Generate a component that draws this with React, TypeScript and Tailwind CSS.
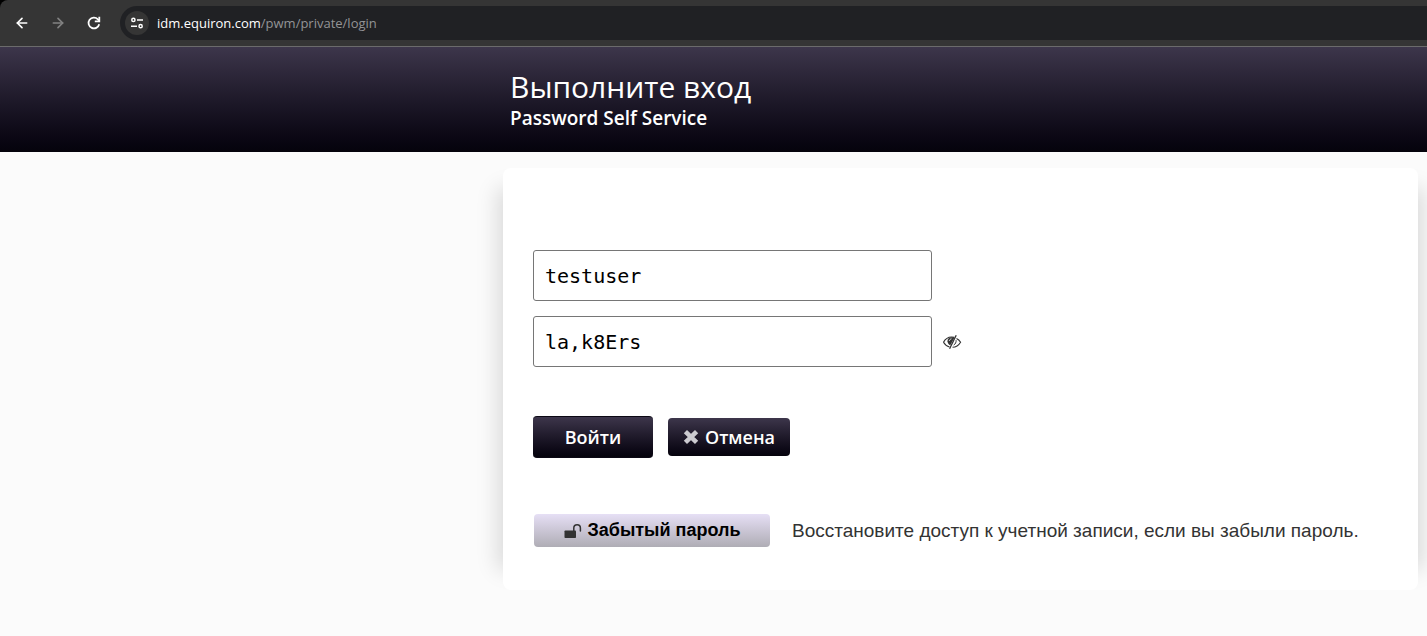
import { useState } from "react";
import { ArrowLeft, ArrowRight } from "lucide-react";

const PAGE_INSET = "pl-[503px] pr-[9px]";

function ReloadIcon() {
  return (
    <svg viewBox="0 0 16 16" className="size-4" fill="none" stroke="currentColor" strokeWidth="1.8" aria-hidden="true">
      <path d="M13.2 9.2A5.4 5.4 0 1 1 11.9 4.300L13.300 5.700" />
      <path d="M13.3 1.8v4.500H8.800" />
    </svg>
  );
}

function TuneIcon() {
  return (
    <svg viewBox="0 0 14 14" className="size-3.5" fill="none" stroke="currentColor" strokeWidth="1.5" aria-hidden="true">
      <circle cx="3.4" cy="3.9" r="1.6" />
      <path d="M7 3.9h6M1 10.2h6" />
      <circle cx="10.6" cy="10.2" r="1.6" />
    </svg>
  );
}

function EyeSlashIcon() {
  return (
    <svg viewBox="0 0 20 16" className="h-4 w-5" fill="none" stroke="currentColor" aria-hidden="true">
      <path d="M1.5 8.2C3.3 4.900 6 3 9.600 3c.9 0 1.800.1 2.600.4M7.500 13C4.900 12.300 2.900 10.600 1.500 8.200" strokeWidth="1.2" />
      <path d="M14.500 4.500C16.300 5.300 17.600 6.600 18.600 8.200C16.700 11.300 14 13.200 10.500 13.300" strokeWidth="1.1" />
      <path d="M9.800 3.200C6.800 3.200 5.300 5 5.500 7.200C5.700 9.200 6.700 10.600 8.300 11.300L12.600 3.600Z" fill="currentColor" stroke="none" />
      <path d="M7.300 7c.2-1.200 1-2 2.200-2.200" stroke="#ffffff" strokeWidth="0.8" />
      <path d="M14.200 1.300L7.600 14.700" strokeWidth="1.300" />
      <path d="M14.100 6.200c.2 2-.6 3.700-2.400 4.900" strokeWidth="1" />
    </svg>
  );
}

function CrossIcon() {
  return (
    <svg viewBox="0 0 16 16" className="size-4" fill="none" stroke="currentColor" strokeWidth="4.6" aria-hidden="true">
      <path d="M2.400 2.600L13.600 13.400M13.600 2.600L2.400 13.400" />
    </svg>
  );
}

function UnlockIcon() {
  return (
    <svg viewBox="0 0 18 16" className="h-4 w-[18px]" aria-hidden="true">
      <rect x="0.500" y="7.500" width="11.500" height="7.500" rx="0.800" fill="currentColor" />
      <path d="M9.800 8V5a3.300 3.300 0 0 1 6.600 0v3" fill="none" stroke="currentColor" strokeWidth="1.500" strokeLinecap="round" />
    </svg>
  );
}

function BrowserBar() {
  return (
    <div className="bg-black">
      <nav className="flex h-[47px] items-center rounded-tl-lg border-b border-[#6b6b6b] bg-[#353535] pl-3.5 text-white">
        <button type="button" aria-label="Back" className="mr-5">
          <ArrowLeft className="size-4" strokeWidth={2.5} />
        </button>
        <button type="button" aria-label="Forward" className="mr-5 text-[#828282]">
          <ArrowRight className="size-4" strokeWidth={2.5} />
        </button>
        <button type="button" aria-label="Reload" className="mr-[18px]">
          <ReloadIcon />
        </button>
        <div className="flex h-[34px] flex-1 items-center gap-2 rounded-l-full bg-[#202124] pl-[5px]">
          <button type="button" aria-label="Site information" className="flex size-6 items-center justify-center rounded-full bg-[#353535]">
            <TuneIcon />
          </button>
          <a href="#" className="font-['Open_Sans',sans-serif] text-[13px] leading-5">
            idm.equiron.com<span className="text-[#939496]">/pwm/private/login</span>
          </a>
        </div>
      </nav>
    </div>
  );
}

export default function App() {
  const [username, setUsername] = useState("testuser");
  const [password, setPassword] = useState("la,k8Ers");
  const [visible, setVisible] = useState(true);

  const field =
    "h-[51px] w-[399px] rounded-[3px] border border-[#767676] bg-white px-[11px] font-['DejaVu_Sans_Mono',monospace] text-[20px] text-black";

  return (
    <div className="min-h-screen bg-[#fbfbfb] font-['Liberation_Sans',Arial,sans-serif] text-[#333333]">
      <BrowserBar />

      <header className={`${PAGE_INSET} h-[105px] bg-linear-to-b from-[#3d364b] to-[#05030c] pt-5 font-['Open_Sans',sans-serif] text-white`}>
        <div className="pl-[7px]">
          <h1 className="text-[30px] leading-10 font-medium">Выполните вход</h1>
          <p className="text-[19px] leading-[22px] font-semibold">Password Self Service</p>
        </div>
      </header>

      <main className={`${PAGE_INSET} py-4`}>
        <form
          onSubmit={(e) => e.preventDefault()}
          className="rounded-lg bg-white px-[30px] pt-[82px] pb-[43px] shadow-[-26px_0_20px_-20px_rgba(0,0,0,0.13),26px_0_20px_-20px_rgba(0,0,0,0.13)]"
        >
          <div className="flex flex-col gap-[15px]">
            <input
              type="text"
              aria-label="Имя пользователя"
              value={username}
              onChange={(e) => setUsername(e.target.value)}
              className={field}
            />
            <div className="flex items-center gap-2.5">
              <input
                type={visible ? "text" : "password"}
                aria-label="Пароль"
                value={password}
                onChange={(e) => setPassword(e.target.value)}
                className={field}
              />
              <button type="button" aria-label="Показать пароль" onClick={() => setVisible((v) => !v)}>
                <EyeSlashIcon />
              </button>
            </div>
          </div>

          <div className="mt-[49px] flex items-center gap-[15px] font-['Open_Sans',sans-serif] font-semibold text-white">
            <button
              type="submit"
              className="h-[42px] w-[120px] rounded border-y border-[#0b0814] bg-linear-to-b from-[#3d364b] to-[#05030c] text-[18px] leading-6"
            >
              Войти
            </button>
            <button
              type="button"
              className="flex h-[38px] w-[122px] items-center justify-center gap-1.5 rounded bg-linear-to-b from-[#3d364b] to-[#05030c] text-[18px] leading-6"
            >
              <span className="text-[#cccbd0]"><CrossIcon /></span>
              Отмена
            </button>
          </div>

          <div className="mt-14 flex items-center gap-[22px] pl-px">
            <button
              type="button"
              className="flex h-[33px] w-[236px] shrink-0 items-center justify-center gap-1.5 rounded bg-linear-to-b from-[#e6dff5] to-[#afadb5] text-[18px] font-bold text-black"
            >
              <span className="text-[#333333]"><UnlockIcon /></span>
              Забытый пароль
            </button>
            <p className="text-[19px] leading-6">Восстановите доступ к учетной записи, если вы забыли пароль.</p>
          </div>
        </form>
      </main>
    </div>
  );
}
